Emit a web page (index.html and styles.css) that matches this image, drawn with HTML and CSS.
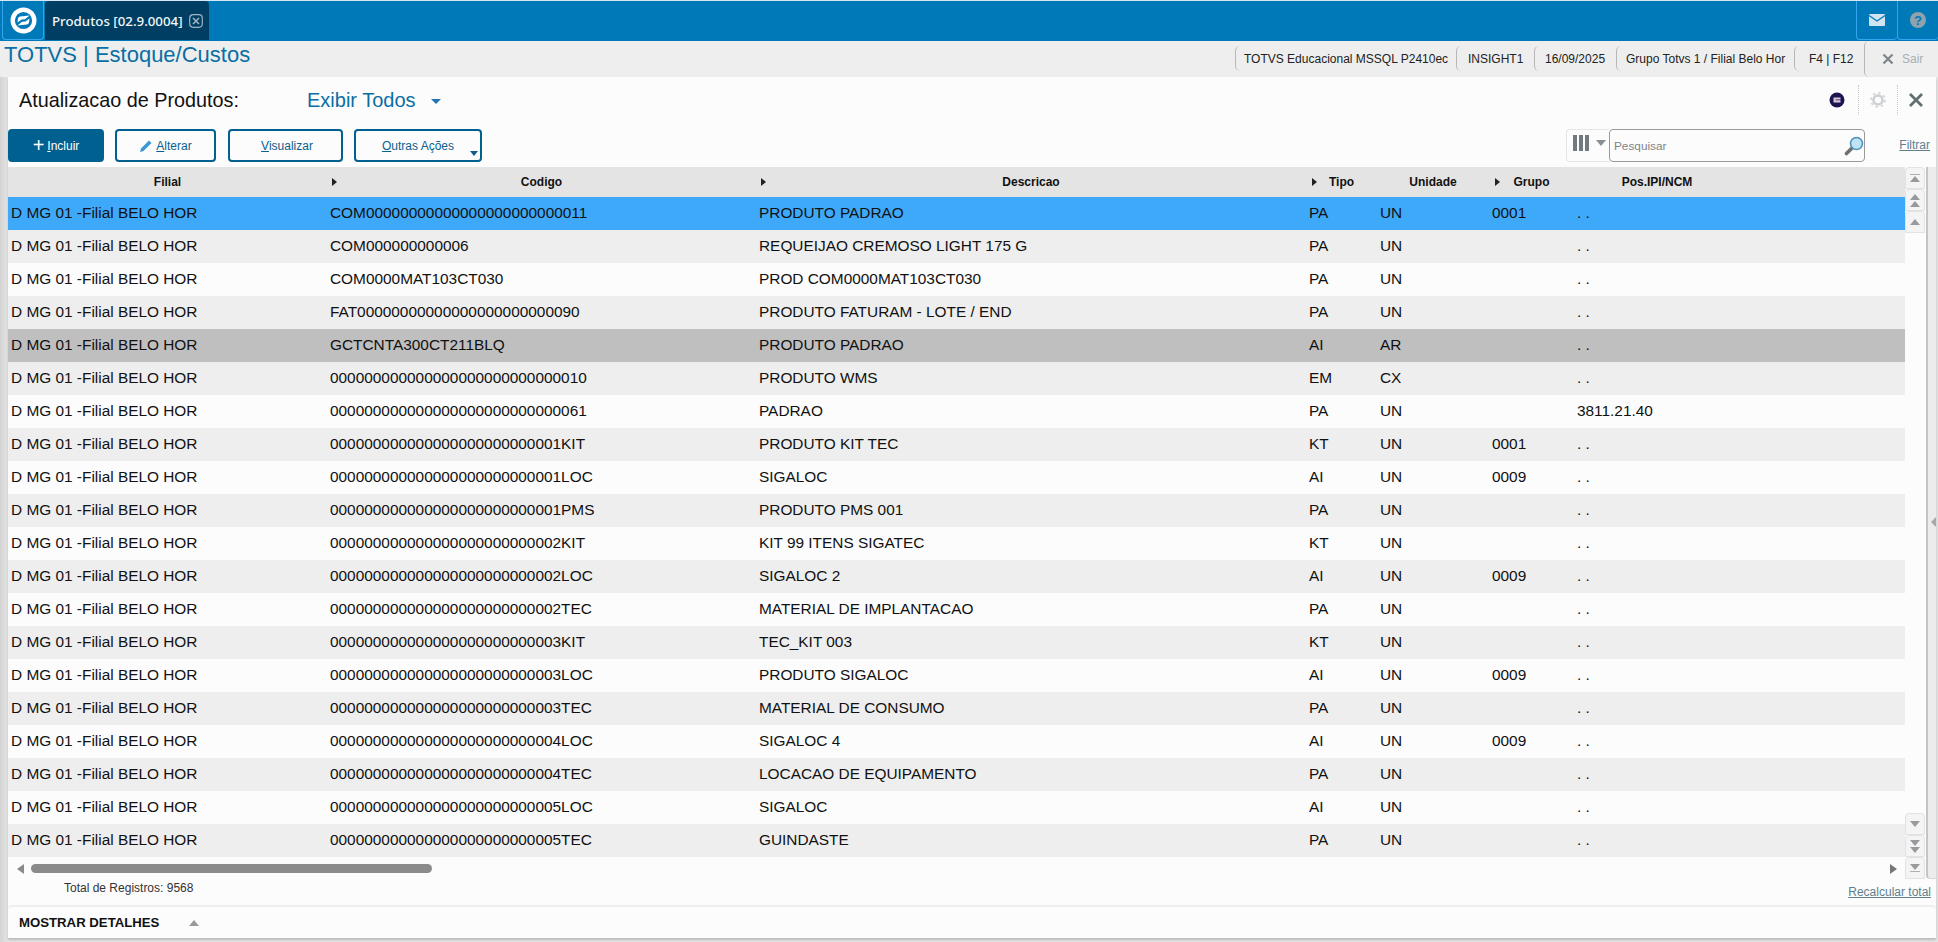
FILE: index.html
```html
<!DOCTYPE html>
<html lang="pt">
<head>
<meta charset="utf-8">
<title>Produtos</title>
<link rel="stylesheet" href="styles.css">
</head>
<body>
<header class="topbar">
  <div class="tabs">
    <div class="logo-tab">
      <svg width="27" height="27" viewBox="0 0 27 27"><circle cx="13.5" cy="13.5" r="13" fill="#fff"/><circle cx="13.5" cy="13.5" r="8.6" fill="#0079b8"/><path d="M7.5 15.5 L8 11.5 Q8.3 9.8 10 9.4 L19.5 8.5 L15 12.2 L11.5 12.6 Z" fill="#fff"/><path d="M19.5 11.5 L19 15.5 Q18.7 17.2 17 17.6 L7.5 18.5 L12 14.8 L15.5 14.4 Z" fill="#fff"/></svg>
    </div>
    <div class="doc-tab">
      <span>Produtos [02.9.0004]</span>
      <svg width="14" height="14" viewBox="0 0 14 14"><rect x="0.7" y="0.7" width="12.6" height="12.6" rx="3.5" fill="none" stroke="#9db3c2" stroke-width="1.2"/><path d="M4 4 L10 10 M10 4 L4 10" stroke="#9db3c2" stroke-width="1.6"/></svg>
    </div>
  </div>
  <div class="top-actions">
    <div class="top-btn">
      <svg width="16" height="12" viewBox="0 0 16 12"><rect width="16" height="12" rx="1" fill="#cfe3f0"/><path d="M0 1.5 L8 7 L16 1.5" fill="none" stroke="#0079b8" stroke-width="1.3"/></svg>
    </div>
    <div class="top-btn">
      <svg width="16" height="16" viewBox="0 0 16 16"><circle cx="8" cy="8" r="8" fill="#8fa3ad"/><text x="8" y="12.5" text-anchor="middle" class="help-q">?</text></svg>
    </div>
  </div>
</header>

<div class="infobar">
  <div class="app-title">TOTVS | Estoque/Custos</div>
  <div class="info-items">
    <span class="info-item info-env">TOTVS Educacional MSSQL P2410ec</span>
    <span class="info-item info-user">INSIGHT1</span>
    <span class="info-item info-date">16/09/2025</span>
    <span class="info-item info-group">Grupo Totvs 1 / Filial Belo Hor</span>
    <span class="info-item info-keys">F4 | F12</span>
    <span class="info-exit">
      <svg width="12" height="12" viewBox="0 0 12 12"><path d="M1.5 1.5 L10.5 10.5 M10.5 1.5 L1.5 10.5" stroke="#7d8488" stroke-width="2.2"/></svg>
      <span>Sair</span>
    </span>
  </div>
</div>

<div class="workspace">
  <div class="panel">
    <div class="title-row">
      <h1 class="page-title">Atualizacao de Produtos:</h1>
      <div class="view-select">Exibir Todos<i class="caret-blue"></i></div>
      <div class="title-tools">
        <span class="tool tool-badge"><svg width="16" height="16" viewBox="0 0 16 16"><circle cx="8" cy="8" r="7.5" fill="#1a1450"/><path d="M4.5 5.5 H11.5 V7.4 H6.5 V8.3 H11.5 V10.5 H4.5 Z" fill="#d8c8d8"/></svg></span>
        <span class="tool tool-gear"><svg width="16" height="16" viewBox="0 0 16 16"><circle cx="8" cy="8" r="4.5" fill="none" stroke="#ccd0d2" stroke-width="2.6"/><circle cx="8" cy="8" r="7" fill="none" stroke="#ccd0d2" stroke-width="1.6" stroke-dasharray="2.4 3.1"/></svg></span>
        <span class="tool tool-close"><svg width="14" height="14" viewBox="0 0 14 14"><path d="M1 1 L13 13 M13 1 L1 13" stroke="#5f6f72" stroke-width="2.8"/></svg></span>
      </div>
    </div>

    <div class="toolbar">
      <button class="btn btn-primary btn-include"><span class="plus">+</span><span><u>I</u>ncluir</span></button>
      <button class="btn btn-edit"><svg width="14" height="14" viewBox="0 0 14 14"><path d="M1 13 L2 9.5 L10 1.5 L12.5 4 L4.5 12 Z" fill="#3b97d3"/></svg><span><u>A</u>lterar</span></button>
      <button class="btn btn-view"><span><u>V</u>isualizar</span></button>
      <button class="btn btn-more"><span><u>O</u>utras Ações</span><i class="caret-dark"></i></button>
      <div class="search-area">
        <div class="col-picker">
          <i class="bar"></i><i class="bar"></i><i class="bar"></i><i class="caret-gray"></i>
        </div>
        <div class="search-box">
          <span class="placeholder">Pesquisar</span>
          <svg width="20" height="20" viewBox="0 0 20 20"><path d="M2.5 17.5 L8 12" stroke="#6f6f6f" stroke-width="3.6" stroke-linecap="round"/><circle cx="12.5" cy="7.5" r="6" fill="#bfe3f5" stroke="#4f93b8" stroke-width="1.6"/></svg>
        </div>
        <a class="link filter-link">Filtrar</a>
      </div>
    </div>

    <div class="grid-wrap">
      <div class="grid-main">
        <table class="grid">
          <colgroup>
            <col class="c-filial"><col class="c-codigo"><col class="c-desc"><col class="c-tipo"><col class="c-un"><col class="c-grupo"><col class="c-ncm"><col>
          </colgroup>
          <thead>
            <tr>
              <th>Filial</th>
              <th class="has-arrow"><i class="th-arrow"></i>Codigo</th>
              <th class="has-arrow"><i class="th-arrow"></i>Descricao</th>
              <th class="has-arrow"><i class="th-arrow arrow-tipo"></i>Tipo</th>
              <th>Unidade</th>
              <th class="has-arrow"><i class="th-arrow arrow-grupo"></i>Grupo</th>
              <th>Pos.IPI/NCM</th>
              <th></th>
            </tr>
          </thead>
          <tbody>
            <tr class="selected"><td>D MG 01 -Filial BELO HOR</td><td>COM00000000000000000000000011</td><td>PRODUTO PADRAO</td><td>PA</td><td>UN</td><td>0001</td><td>. .</td><td></td></tr>
            <tr><td>D MG 01 -Filial BELO HOR</td><td>COM000000000006</td><td>REQUEIJAO CREMOSO LIGHT 175 G</td><td>PA</td><td>UN</td><td></td><td>. .</td><td></td></tr>
            <tr><td>D MG 01 -Filial BELO HOR</td><td>COM0000MAT103CT030</td><td>PROD COM0000MAT103CT030</td><td>PA</td><td>UN</td><td></td><td>. .</td><td></td></tr>
            <tr><td>D MG 01 -Filial BELO HOR</td><td>FAT00000000000000000000000090</td><td>PRODUTO FATURAM - LOTE / END</td><td>PA</td><td>UN</td><td></td><td>. .</td><td></td></tr>
            <tr class="blocked"><td>D MG 01 -Filial BELO HOR</td><td>GCTCNTA300CT211BLQ</td><td>PRODUTO PADRAO</td><td>AI</td><td>AR</td><td></td><td>. .</td><td></td></tr>
            <tr><td>D MG 01 -Filial BELO HOR</td><td>000000000000000000000000000010</td><td>PRODUTO WMS</td><td>EM</td><td>CX</td><td></td><td>. .</td><td></td></tr>
            <tr><td>D MG 01 -Filial BELO HOR</td><td>000000000000000000000000000061</td><td>PADRAO</td><td>PA</td><td>UN</td><td></td><td>3811.21.40</td><td></td></tr>
            <tr><td>D MG 01 -Filial BELO HOR</td><td>000000000000000000000000001KIT</td><td>PRODUTO KIT TEC</td><td>KT</td><td>UN</td><td>0001</td><td>. .</td><td></td></tr>
            <tr><td>D MG 01 -Filial BELO HOR</td><td>000000000000000000000000001LOC</td><td>SIGALOC</td><td>AI</td><td>UN</td><td>0009</td><td>. .</td><td></td></tr>
            <tr><td>D MG 01 -Filial BELO HOR</td><td>000000000000000000000000001PMS</td><td>PRODUTO PMS 001</td><td>PA</td><td>UN</td><td></td><td>. .</td><td></td></tr>
            <tr><td>D MG 01 -Filial BELO HOR</td><td>000000000000000000000000002KIT</td><td>KIT 99 ITENS SIGATEC</td><td>KT</td><td>UN</td><td></td><td>. .</td><td></td></tr>
            <tr><td>D MG 01 -Filial BELO HOR</td><td>000000000000000000000000002LOC</td><td>SIGALOC 2</td><td>AI</td><td>UN</td><td>0009</td><td>. .</td><td></td></tr>
            <tr><td>D MG 01 -Filial BELO HOR</td><td>000000000000000000000000002TEC</td><td>MATERIAL DE IMPLANTACAO</td><td>PA</td><td>UN</td><td></td><td>. .</td><td></td></tr>
            <tr><td>D MG 01 -Filial BELO HOR</td><td>000000000000000000000000003KIT</td><td>TEC_KIT 003</td><td>KT</td><td>UN</td><td></td><td>. .</td><td></td></tr>
            <tr><td>D MG 01 -Filial BELO HOR</td><td>000000000000000000000000003LOC</td><td>PRODUTO SIGALOC</td><td>AI</td><td>UN</td><td>0009</td><td>. .</td><td></td></tr>
            <tr><td>D MG 01 -Filial BELO HOR</td><td>000000000000000000000000003TEC</td><td>MATERIAL DE CONSUMO</td><td>PA</td><td>UN</td><td></td><td>. .</td><td></td></tr>
            <tr><td>D MG 01 -Filial BELO HOR</td><td>000000000000000000000000004LOC</td><td>SIGALOC 4</td><td>AI</td><td>UN</td><td>0009</td><td>. .</td><td></td></tr>
            <tr><td>D MG 01 -Filial BELO HOR</td><td>000000000000000000000000004TEC</td><td>LOCACAO DE EQUIPAMENTO</td><td>PA</td><td>UN</td><td></td><td>. .</td><td></td></tr>
            <tr><td>D MG 01 -Filial BELO HOR</td><td>000000000000000000000000005LOC</td><td>SIGALOC</td><td>AI</td><td>UN</td><td></td><td>. .</td><td></td></tr>
            <tr><td>D MG 01 -Filial BELO HOR</td><td>000000000000000000000000005TEC</td><td>GUINDASTE</td><td>PA</td><td>UN</td><td></td><td>. .</td><td></td></tr>
          </tbody>
        </table>
        <div class="hscroll">
          <i class="tri-left"></i>
          <div class="hscroll-track"><div class="hscroll-thumb"></div></div>
          <i class="tri-right"></i>
        </div>
      </div>
      <div class="vscroll">
        <div class="vbtns">
          <div class="vbtn"><i class="line"></i><i class="tri-up"></i></div>
          <div class="vbtn"><i class="tri-up"></i><i class="tri-up"></i></div>
          <div class="vbtn"><i class="tri-up"></i></div>
        </div>
        <div class="vbtns">
          <div class="vbtn"><i class="tri-down"></i></div>
          <div class="vbtn"><i class="tri-down"></i><i class="tri-down"></i></div>
          <div class="vbtn"><i class="tri-down"></i><i class="line"></i></div>
        </div>
      </div>
      <div class="vtrack"><i class="handle-chevron"></i></div>
    </div>

    <div class="totals">
      <span class="total-count">Total de Registros: 9568</span>
      <a class="link recalc">Recalcular total</a>
    </div>

    <div class="details">
      <span class="details-label">MOSTRAR DETALHES</span>
      <i class="tri-up tri-details"></i>
    </div>
  </div>
</div>
</body>
</html>
```

FILE: styles.css
```css
* { box-sizing: border-box; }
html, body { margin: 0; padding: 0; }
body {
  width: 1938px;
  height: 942px;
  overflow: hidden;
  display: flex;
  flex-direction: column;
  font-family: "Liberation Sans", Arial, sans-serif;
  color: #111;
  background: #e9e9e9;
}

/* top bar */
.topbar {
  height: 41px;
  flex: none;
  background: #0079b8;
  border-top: 1px solid #d5e8f3;
  display: flex;
  justify-content: space-between;
}
.tabs { display: flex; padding-left: 2px; gap: 1px; }
.logo-tab {
  width: 42px;
  height: 39px;
  background: #0079b8;
  border: 1px solid #35a5ef;
  border-top: 0;
  border-radius: 0 0 4px 4px;
  display: flex;
  align-items: center;
  justify-content: center;
}
.doc-tab {
  width: 164px;
  height: 39px;
  background: #003f63;
  border-radius: 4px 4px 0 0;
  display: flex;
  align-items: center;
  gap: 6px;
  padding-left: 7px;
  color: #f2f6f9;
  font-family: "Noto Sans", sans-serif;
  font-size: 13.3px;
  font-weight: 500;
}
.top-actions { display: flex; }
.top-btn {
  width: 41px;
  height: 39px;
  border: 1px solid #35a5ef;
  border-top: 0;
  border-right-width: 0;
  border-radius: 0 0 4px 4px;
  display: flex;
  align-items: center;
  justify-content: center;
}
.help-q { font-size: 13px; font-weight: 700; fill: #0079b8; font-family: "Liberation Sans", sans-serif; }

/* info bar */
.infobar {
  height: 36px;
  flex: none;
  background: #eee;
  display: flex;
  justify-content: space-between;
  align-items: flex-start;
}
.app-title { font-size: 22px; line-height: 23px; padding: 2px 0 0 4px; color: #0a6ea4; }
.info-items { display: flex; align-items: stretch; height: 36px; font-size: 12px; color: #222; }
.info-item {
  display: flex;
  align-items: center;
  height: 25px;
  margin-top: 5px;
  padding-left: 8px;
  border-left: 1px solid #b7b7b7;
  border-radius: 5px 0 0 5px;
}
.info-env { width: 221px; }
.info-user { width: 78px; padding-left: 11px; }
.info-date { width: 82px; padding-left: 10px; }
.info-group { width: 178px; padding-left: 9px; }
.info-keys { width: 70px; padding-left: 14px; }
.info-exit {
  width: 74px;
  display: flex;
  align-items: center;
  gap: 8px;
  padding-left: 17px;
  border-left: 1px solid #b7b7b7;
  border-radius: 5px 0 0 5px;
  color: #a8b0b4;
}

/* workspace */
.workspace { flex: 1; display: flex; padding-left: 8px; min-height: 0; background: linear-gradient(90deg, #d4d4d4, #e4e4e4 8px); }
.panel { width: 1928px; height: 861px; background: #fcfcfc; display: flex; flex-direction: column; box-shadow: 0 2px 2px #bbb; }

.title-row { height: 52px; flex: none; display: flex; align-items: center; padding: 0 3px 6px 11px; }
.page-title { margin: 0; width: 288px; font-size: 19.8px; font-weight: 400; color: #111; }
.view-select { font-size: 20px; color: #0a6ea4; display: flex; align-items: center; gap: 15px; }
.caret-blue { width: 0; height: 0; border: 5px solid transparent; border-top: 5px solid #1f74b8; border-bottom: 0; margin-top: 3px; }
.title-tools { margin-left: auto; display: flex; align-items: center; height: 30px; }
.tool { height: 30px; display: flex; align-items: center; justify-content: center; }
.tool-badge { width: 42px; }
.tool-gear { width: 39px; border-left: 1px dotted #c8c8c8; }
.tool-close { width: 36px; border-left: 1px dotted #c8c8c8; }

/* toolbar */
.toolbar { height: 33px; flex: none; display: flex; gap: 11px; }
.btn {
  height: 33px;
  padding: 0;
  background: #fcfcfc;
  border: 2px solid #00608f;
  border-radius: 4px;
  font-family: "Liberation Sans", sans-serif;
  font-size: 12px;
  color: #0a5f8d;
  display: flex;
  align-items: center;
  justify-content: center;
  gap: 3px;
}
.btn-primary { background: #00608f; color: #fff; }
.plus { font-size: 20px; line-height: 20px; font-weight: 400; margin-top: -2px; }
.btn-include { width: 96px; }
.btn-edit { width: 101px; }
.btn-view { width: 115px; margin-left: 1px; padding-left: 3px; }
.btn-more { width: 128px; position: relative; }
.caret-dark { position: absolute; right: 2px; bottom: 4px; width: 0; height: 0; border: 4px solid transparent; border-top: 5px solid #0a5f8d; border-bottom: 0; }
.search-area { margin-left: auto; display: flex; align-items: stretch; padding-right: 6px; }
.col-picker {
  width: 43px;
  border: 1px solid #e6e6e6;
  border-right: 0;
  border-radius: 4px 0 0 4px;
  display: flex;
  align-items: flex-start;
  padding: 5px 0 0 6px;
  gap: 2px;
}
.bar { width: 4px; height: 16px; background: #727a80; }
.caret-gray { width: 0; height: 0; margin: 5px 0 0 5px; border: 5px solid transparent; border-top: 6px solid #8a8f93; border-bottom: 0; }
.search-box {
  width: 256px;
  border: 1px solid #9a9a9a;
  border-radius: 4px;
  display: flex;
  align-items: center;
  justify-content: space-between;
  padding: 0 0 0 4px;
}
.placeholder { font-size: 11.8px; color: #848484; }
.link { color: #5f7f8f; text-decoration: underline; font-size: 12px; }
.filter-link { width: 65px; text-align: right; align-self: center; margin-top: -1px; }

/* grid */
.grid-wrap { flex: none; margin-top: 5px; height: 712px; display: flex; }
.grid-main { width: 1897px; height: 712px; flex: none; display: flex; flex-direction: column; }
.grid { width: 1897px; table-layout: fixed; border-collapse: collapse; border-spacing: 0; flex: none; }
.c-filial { width: 319px; }
.c-codigo { width: 429px; }
.c-desc { width: 550px; }
.c-tipo { width: 71px; }
.c-un { width: 112px; }
.c-grupo { width: 85px; }
.c-ncm { width: 166px; }
.grid th {
  height: 30px;
  padding: 0;
  background: #e4e4e4;
  font-size: 12px;
  font-weight: 700;
  color: #111;
  text-align: center;
}
.has-arrow { position: relative; }
.th-arrow { position: absolute; left: 5px; top: 11px; width: 0; height: 0; border: 4px solid transparent; border-left: 5px solid #222; border-right: 0; }
.arrow-tipo { left: 6px; }
.arrow-grupo { left: 6px; }
.grid td {
  height: 33px;
  padding: 0 0 2px 3px;
  font-size: 15.4px;
  white-space: nowrap;
  overflow: hidden;
  color: #111;
}
.grid tbody tr:nth-child(odd) { background: #fcfcfc; }
.grid tbody tr:nth-child(even) { background: #eee; }
.grid tbody tr.selected { background: #3fa9f9; }
.grid tbody tr.blocked { background: #bfbfbf; }

.hscroll { height: 22px; display: flex; align-items: center; padding: 0 8px 0 9px; gap: 7px; margin-top: 1px; }
.tri-left { width: 0; height: 0; border: 5px solid transparent; border-right: 7px solid #8a8a8a; border-left: 0; }
.tri-right { width: 0; height: 0; border: 5px solid transparent; border-left: 7px solid #777; border-right: 0; }
.hscroll-track { flex: 1; height: 9px; }
.hscroll-thumb { width: 401px; height: 9px; background: #8b8b8b; border-radius: 5px; }

.vscroll { width: 21px; flex: none; height: 712px; display: flex; flex-direction: column; justify-content: space-between; }
.vbtns { display: flex; flex-direction: column; }
.vbtn {
  height: 22px;
  width: 20px;
  background: #f4f4f4;
  border: 1px solid #e2e2e2;
  border-radius: 4px 4px 0 0;
  display: flex;
  flex-direction: column;
  align-items: center;
  justify-content: center;
  gap: 1px;
}
.tri-up { width: 0; height: 0; border: 5px solid transparent; border-bottom: 6px solid #9a9a9e; border-top: 0; }
.tri-down { width: 0; height: 0; border: 5px solid transparent; border-top: 6px solid #9a9a9e; border-bottom: 0; }
.line { width: 10px; height: 1px; background: #b0b0b0; }
.vtrack {
  width: 10px;
  flex: none;
  position: relative;
  background: #ececec;
  border-left: 2px solid #c4c4c4;
  border-bottom: 1px solid #d5d5d5;
  border-radius: 0 0 0 4px;
}
.handle-chevron {
  position: absolute;
  right: 0;
  top: 350px;
  width: 0;
  height: 0;
  border: 5px solid transparent;
  border-right: 5px solid #a8a8a8;
  border-left: 0;
}

/* footer */
.totals { flex: 1; display: flex; justify-content: space-between; align-items: center; padding: 0 5px 2px 56px; font-size: 12px; color: #333; }
.total-count { margin-top: -6px; }
.recalc { margin-top: 2px; }
.details {
  height: 33px;
  flex: none;
  display: flex;
  align-items: center;
  gap: 30px;
  padding-left: 11px;
  border-top: 2px solid #eee;
  border-radius: 4px 4px 0 0;
}
.details-label { font-size: 13.2px; font-weight: 700; color: #111; }
```
